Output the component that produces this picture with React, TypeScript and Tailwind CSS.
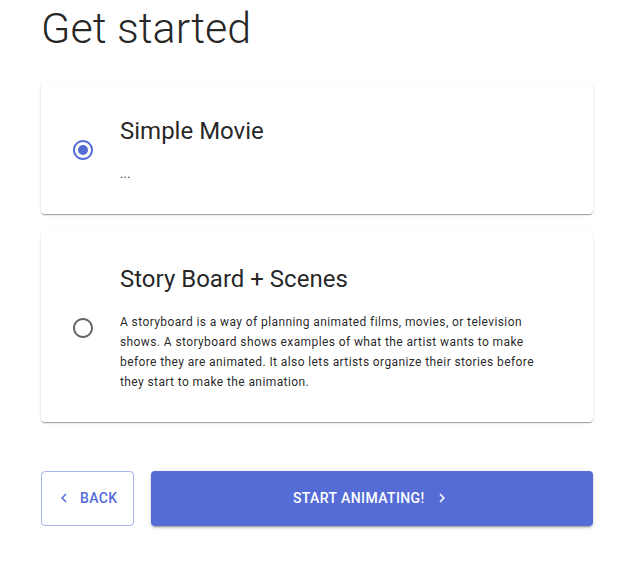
import React, { useState } from "react";

const SHADOW1 =
  "shadow-[0px_2px_1px_-1px_rgba(0,0,0,0.2),0px_1px_1px_0px_rgba(0,0,0,0.14),0px_1px_3px_0px_rgba(0,0,0,0.12)]";

function Radio({ checked }: { checked: boolean }) {
  return (
    <div className="w-[42px] h-[42px] flex items-center justify-center shrink-0">
      <svg width="24" height="24" viewBox="0 0 24 24">
        {checked ? (
          <>
            <path
              fill="#556cd6"
              d="M12 2C6.48 2 2 6.48 2 12s4.48 10 10 10 10-4.48 10-10S17.52 2 12 2zm0 18c-4.42 0-8-3.58-8-8s3.58-8 8-8 8 3.58 8 8-3.58 8-8 8z"
            />
            <circle cx="12" cy="12" r="5" fill="#556cd6" />
          </>
        ) : (
          <path
            fill="rgba(0,0,0,0.6)"
            d="M12 2C6.48 2 2 6.48 2 12s4.48 10 10 10 10-4.48 10-10S17.52 2 12 2zm0 18c-4.42 0-8-3.58-8-8s3.58-8 8-8 8 3.58 8 8-3.58 8-8 8z"
          />
        )}
      </svg>
    </div>
  );
}

function OptionCard({
  title,
  desc,
  checked,
  onClick,
}: {
  title: string;
  desc: string;
  checked: boolean;
  onClick: () => void;
}) {
  return (
    <div
      onClick={onClick}
      className={`bg-white rounded-[4px] ${SHADOW1} flex items-center pl-[21px] pr-[40px] pt-[32px] pb-[29px] cursor-pointer`}
    >
      <Radio checked={checked} />
      <div className="ml-[16px] flex-1">
        <div className="text-[24px] leading-[32px] font-normal text-[rgba(0,0,0,0.87)]">
          {title}
        </div>
        <div className="mt-[18px] text-[12px] leading-[19.92px] tracking-[0.4px] text-[rgba(0,0,0,0.87)]">
          {desc}
        </div>
      </div>
    </div>
  );
}

export default function App() {
  const [sel, setSel] = useState(0);
  return (
    <div
      className="w-[631px] h-[565px] bg-white overflow-hidden"
      style={{ fontFamily: "Roboto, 'Liberation Sans', sans-serif" }}
    >
      <div className="ml-[41px] w-[552px]">
        <h1 className="text-[43px] leading-[56px] font-light text-[rgba(0,0,0,0.87)] m-0">
          Get started
        </h1>
        <div className="mt-[27px] flex flex-col gap-[17px]">
          <OptionCard
            title="Simple Movie"
            desc="..."
            checked={sel === 0}
            onClick={() => setSel(0)}
          />
          <OptionCard
            title="Story Board + Scenes"
            desc="A storyboard is a way of planning animated films, movies, or television shows. A storyboard shows examples of what the artist wants to make before they are animated. It also lets artists organize their stories before they start to make the animation."
            checked={sel === 1}
            onClick={() => setSel(1)}
          />
        </div>
        <div className="mt-[49px] flex gap-[17px]">
          <button className="h-[55px] flex items-center border border-[rgba(85,108,214,0.5)] rounded-[4px] pl-[13px] pr-[15px] text-[#556cd6] text-[14px] font-medium tracking-[0.4px] uppercase">
            <svg width="18" height="18" viewBox="0 0 24 24" className="mr-[7px]">
              <path fill="currentColor" d="M15.41 7.41 14 6l-6 6 6 6 1.41-1.41L10.83 12z" />
            </svg>
            Back
          </button>
          <button className="flex-1 h-[55px] flex items-center justify-center rounded-[4px] bg-[#556cd6] text-white text-[14px] font-medium tracking-[0.4px] uppercase shadow-[0px_3px_1px_-2px_rgba(0,0,0,0.2),0px_2px_2px_0px_rgba(0,0,0,0.14),0px_1px_5px_0px_rgba(0,0,0,0.12)]">
            Start Animating!
            <svg width="18" height="18" viewBox="0 0 24 24" className="ml-[8px]">
              <path fill="currentColor" d="M10 6 8.59 7.41 13.17 12l-4.58 4.59L10 18l6-6z" />
            </svg>
          </button>
        </div>
      </div>
    </div>
  );
}
